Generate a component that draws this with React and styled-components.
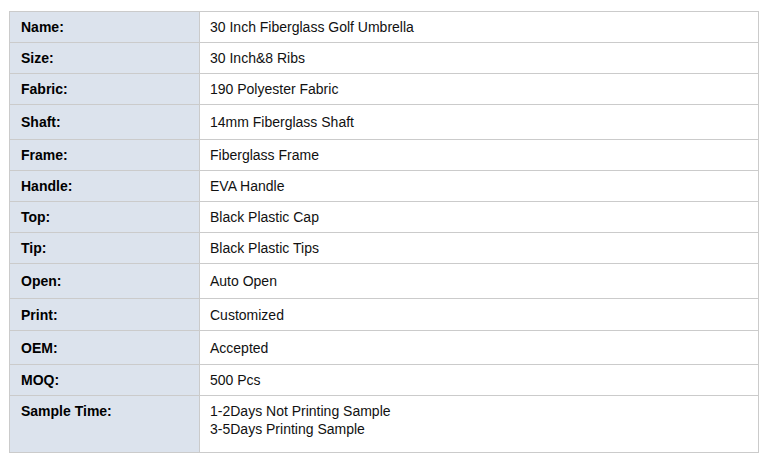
import React from 'react';
import styled, { createGlobalStyle } from 'styled-components';

const GlobalStyle = createGlobalStyle`
  html, body {
    margin: 0;
    padding: 0;
    background: #fff;
  }

  body {
    font-family: "Liberation Sans", Arial, sans-serif;
    font-size: 14px;
    color: #111;
  }
`;

const Page = styled.div`
  padding: 11px 9px;
`;

const Table = styled.div`
  width: 750px;
  box-sizing: border-box;
  border-top: 1px solid #cbcbcb;
  border-left: 1px solid #cbcbcb;
`;

const Row = styled.div`
  display: grid;
  grid-template-columns: 190px 559px;
  height: ${({ height }) => height}px;
`;

const Cell = styled.div`
  box-sizing: border-box;
  display: flex;
  align-items: ${({ top }) => (top ? 'flex-start' : 'center')};
  padding-top: ${({ top }) => (top ? '6px' : '0')};
  border-right: 1px solid #cbcbcb;
  border-bottom: 1px solid #cbcbcb;
  line-height: 18px;
`;

const Label = styled(Cell)`
  padding-left: 11px;
  background: #dce3ed;
  font-weight: bold;
  color: #000;
`;

const Value = styled(Cell)`
  padding-left: 10px;
  background: #fff;
`;

const Lines = styled.div`
  display: flex;
  flex-direction: column;
`;

const specs = [
  { label: 'Name:', value: ['30 Inch Fiberglass Golf Umbrella'], height: 31 },
  { label: 'Size:', value: ['30 Inch&8 Ribs'], height: 31 },
  { label: 'Fabric:', value: ['190 Polyester Fabric'], height: 31 },
  { label: 'Shaft:', value: ['14mm Fiberglass Shaft'], height: 35 },
  { label: 'Frame:', value: ['Fiberglass Frame'], height: 31 },
  { label: 'Handle:', value: ['EVA Handle'], height: 31 },
  { label: 'Top:', value: ['Black Plastic Cap'], height: 31 },
  { label: 'Tip:', value: ['Black Plastic Tips'], height: 31 },
  { label: 'Open:', value: ['Auto Open'], height: 35 },
  { label: 'Print:', value: ['Customized'], height: 32 },
  { label: 'OEM:', value: ['Accepted'], height: 34 },
  { label: 'MOQ:', value: ['500 Pcs'], height: 31 },
  {
    label: 'Sample Time:',
    value: ['1-2Days Not Printing Sample', '3-5Days Printing Sample'],
    height: 57,
    top: true
  }
];

const App = () => (
  <Page>
    <GlobalStyle />
    <Table>
      {specs.map((spec) => (
        <Row key={spec.label} height={spec.height}>
          <Label top={spec.top}>{spec.label}</Label>
          <Value top={spec.top}>
            <Lines>
              {spec.value.map((line) => (
                <span key={line}>{line}</span>
              ))}
            </Lines>
          </Value>
        </Row>
      ))}
    </Table>
  </Page>
);

export default App;
